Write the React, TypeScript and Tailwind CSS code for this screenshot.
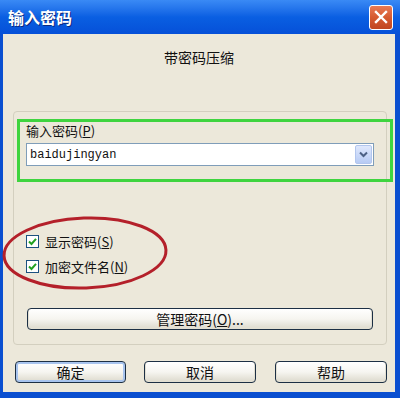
import React from "react";

const cjk = { fontFamily: '"Noto Sans CJK SC", "Noto Sans", sans-serif' };

function XpButton({ children, isDefault = false, className = "" }: { children: React.ReactNode; isDefault?: boolean; className?: string }) {
  return (
    <div
      className={`flex items-center justify-center rounded-[4px] border border-[#1c2f44] bg-gradient-to-b from-[#ffffff] via-[#f6f5f0] to-[#dcd9cc] text-[14px] leading-none text-[#111] ${
        isDefault ? "shadow-[inset_0_0_0_2px_#a8c4ee]" : "shadow-[inset_0_-1px_0_1px_#e2dfd2]"
      } ${className}`}
      style={cjk}
    >
      {children}
    </div>
  );
}

function CheckBox() {
  return (
    <div className="flex h-[13px] w-[13px] items-center justify-center border border-[#1c5180] bg-white">
      <svg width="9" height="9" viewBox="0 0 9 9">
        <path d="M1 4.5 L3.5 7 L8 1.8" fill="none" stroke="#21a121" strokeWidth="2" />
      </svg>
    </div>
  );
}

export default function App() {
  return (
    <div className="relative flex h-[398px] w-[400px] flex-col overflow-hidden bg-[#0a4fd0]" style={cjk}>
      {/* Title bar */}
      <div className="flex h-[34px] shrink-0 items-center justify-between bg-gradient-to-b from-[#3a8af5] via-[#0a5fe2] to-[#0650d8] pl-[8px] pr-[7px]">
        <span className="text-[16px] font-bold text-white [text-shadow:1px_1px_0_#0a2a80]" style={cjk}>
          输入密码
        </span>
        <div className="flex h-[25px] w-[24px] items-center justify-center rounded-[3px] border border-white bg-gradient-to-b from-[#e87a55] via-[#d65a30] to-[#c04520]">
          <svg width="14" height="14" viewBox="0 0 14 14">
            <path d="M2 2 L12 12 M12 2 L2 12" stroke="white" strokeWidth="2.4" strokeLinecap="square" />
          </svg>
        </div>
      </div>

      {/* Body */}
      <div className="ml-[3px] mr-[5px] mb-[6px] flex flex-1 flex-col bg-[#ece8da]">
        <div className="pt-[16px] text-center text-[14px] leading-[14px] text-[#111]">带密码压缩</div>

        {/* Group box */}
        <div className="ml-[10px] mr-[8px] mt-[47px] flex flex-col rounded-[4px] border border-[#d3cfbf] pb-[14px] pl-[12px] pr-[12px] pt-[12px]">
          <div className="text-[13px] leading-[13px] text-[#111]">输入密码(<span className="underline">P</span>)</div>
          <div className="mt-[6px] flex h-[23px] items-center border border-[#7f9db9] bg-white pl-[3px] pr-[1px]">
            <span className="flex-1 text-[12px] text-[#111]" style={{ fontFamily: '"Liberation Mono", monospace' }}>
              baidujingyan
            </span>
            <div className="flex h-[19px] w-[17px] items-center justify-center rounded-[2px] border border-[#b2c6ee] bg-gradient-to-b from-[#dfe8fd] to-[#b7cbf4]">
              <svg width="9" height="7" viewBox="0 0 9 7">
                <path d="M1 1.5 L4.5 5 L8 1.5" fill="none" stroke="#4d6185" strokeWidth="2" />
              </svg>
            </div>
          </div>

          <div className="mt-[69px] flex items-center gap-[6px]">
            <CheckBox />
            <span className="text-[13px] leading-[13px] text-[#111]">显示密码(<span className="underline">S</span>)</span>
          </div>
          <div className="mt-[12px] flex items-center gap-[6px]">
            <CheckBox />
            <span className="text-[13px] leading-[13px] text-[#111]">加密文件名(<span className="underline">N</span>)</span>
          </div>

          <XpButton className="mt-[35px] ml-[1px] mr-[1px] h-[22px] text-[13px]">
            管理密码(<span className="underline">O</span>)...
          </XpButton>
        </div>

        {/* Bottom buttons */}
        <div className="mt-[16px] flex gap-[18px] pl-[12px]">
          <XpButton isDefault className="h-[22px] w-[111px]">确定</XpButton>
          <XpButton className="h-[22px] w-[112px]">取消</XpButton>
          <XpButton className="ml-[1px] h-[22px] w-[112px]">帮助</XpButton>
        </div>
      </div>

      {/* Annotation: green rectangle */}
      <div className="pointer-events-none absolute left-[17px] top-[119px] h-[63px] w-[376px] border-[3px] border-[#3fd43f]" />

      {/* Annotation: red ellipse */}
      <svg className="pointer-events-none absolute left-0 top-0" width="400" height="398" viewBox="0 0 400 398">
        <ellipse cx="85" cy="253" rx="81" ry="35" fill="none" stroke="#b4202a" strokeWidth="3" transform="rotate(-2 85 253)" />
      </svg>
    </div>
  );
}
